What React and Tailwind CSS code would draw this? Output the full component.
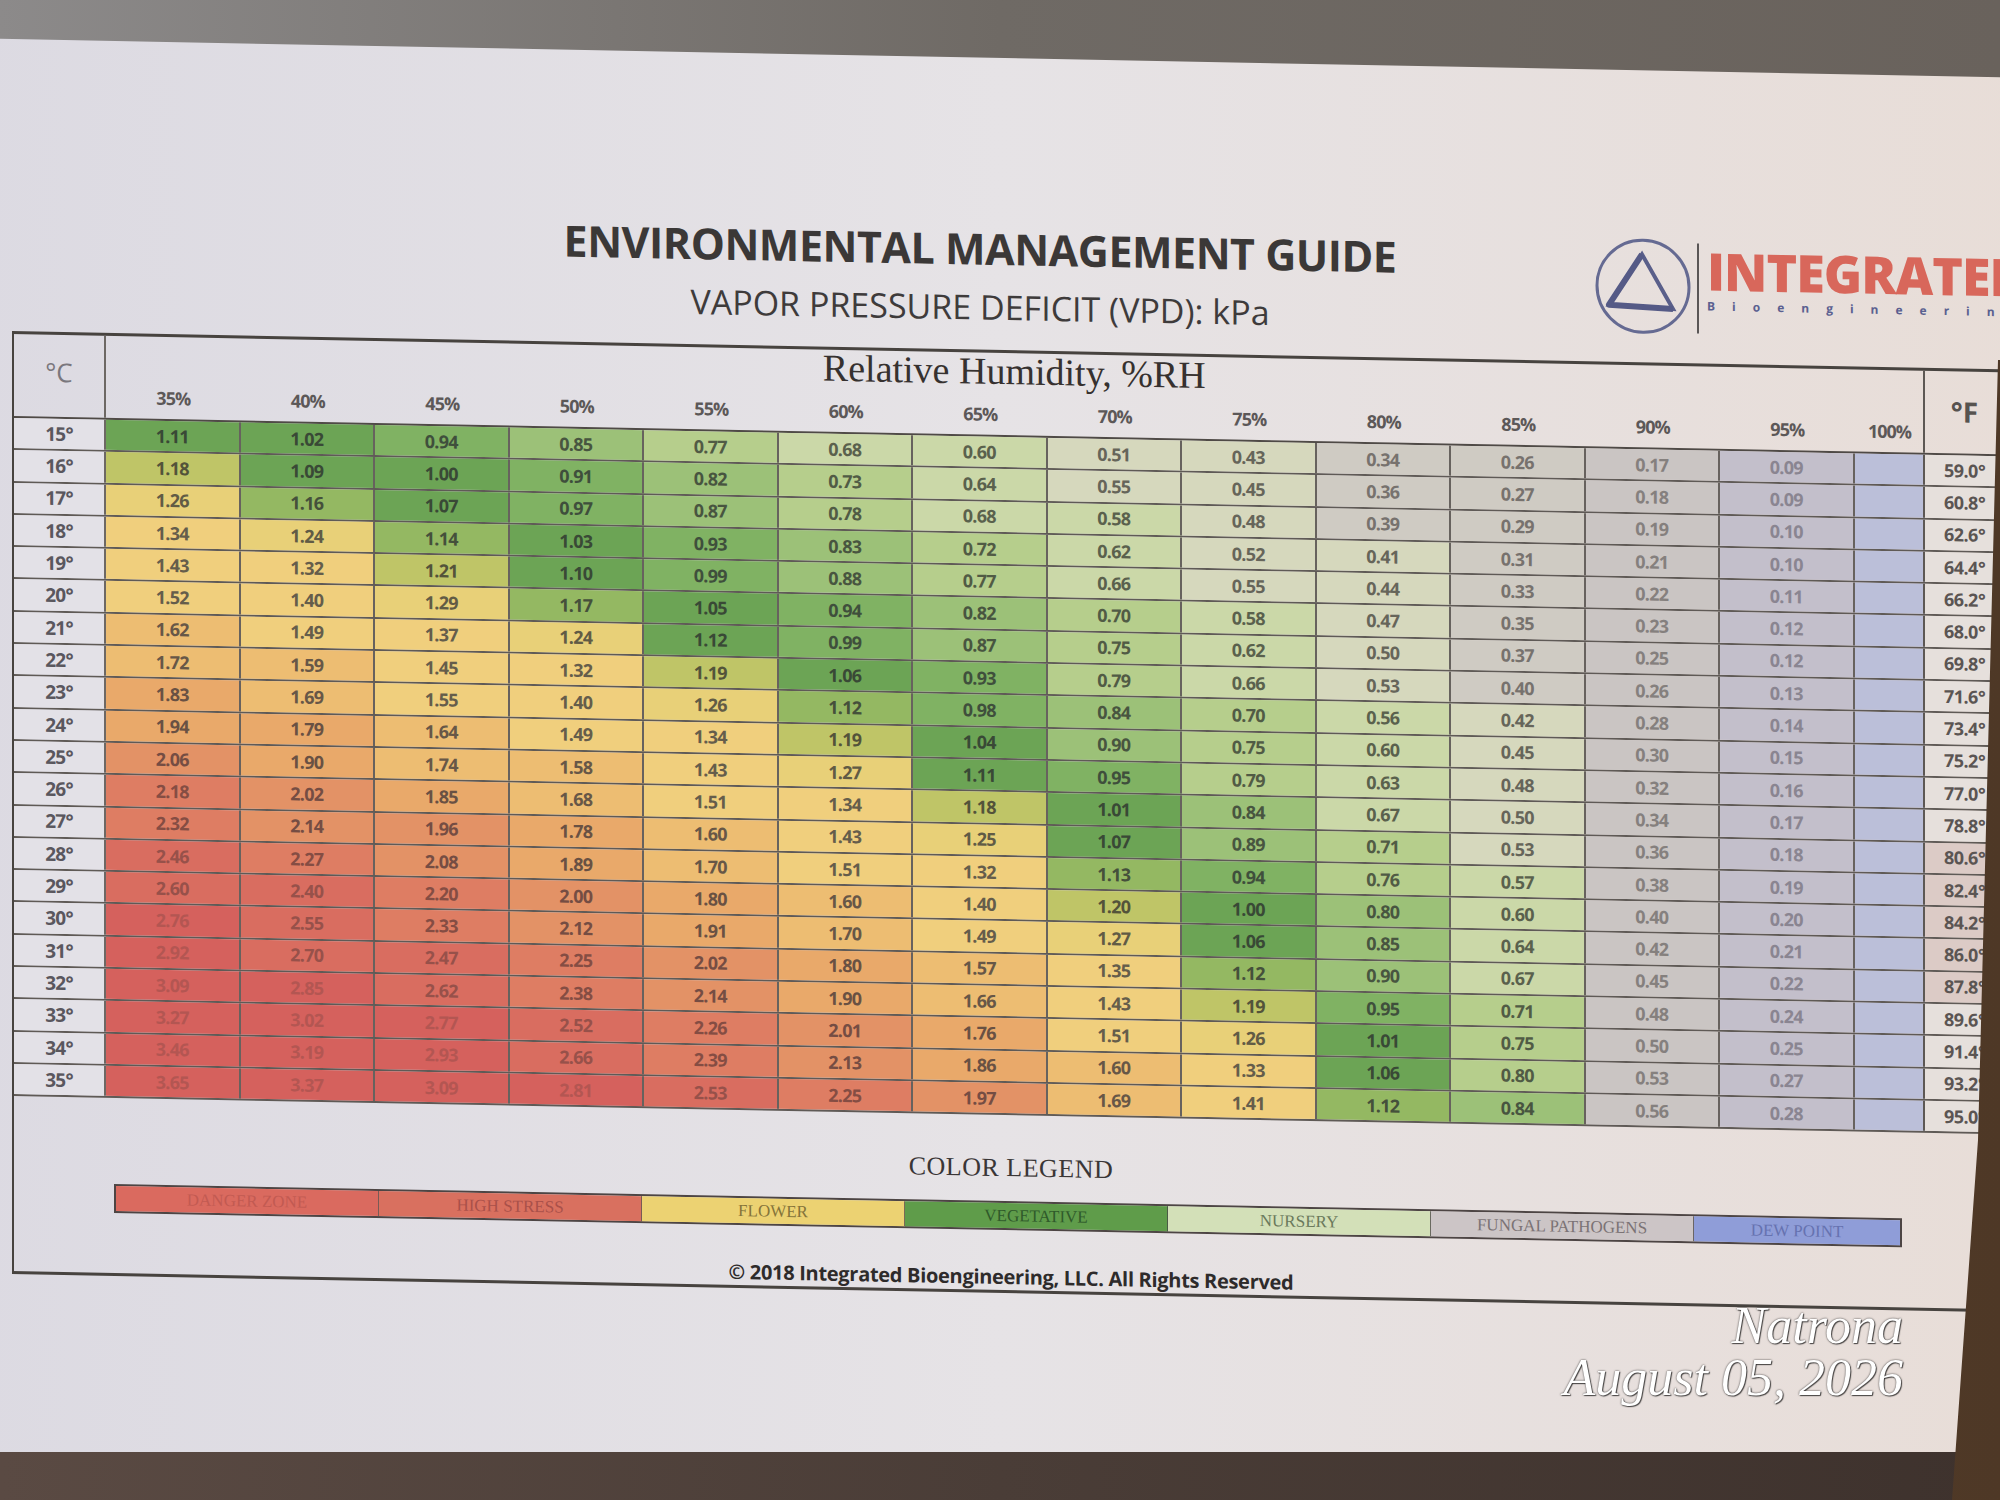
import React from "react";

const TEMPS = Array.from({ length: 21 }, (_, i) => 15 + i);
const RHS = [35, 40, 45, 50, 55, 60, 65, 70, 75, 80, 85, 90, 95, 100];
const svp = (t) => 0.6108 * Math.exp((17.27 * t) / (t + 237.3));

const BUCKETS = [
  [0.4, "bg-[#cfcbc3]", "text-[#77726e]"],
  [0.55, "bg-[#d6d8bd]", "text-[#66655a]"],
  [0.7, "bg-[#cbd8a8]", "text-[#5a614d]"],
  [0.8, "bg-[#b6ce8c]", "text-[#515b45]"],
  [0.9, "bg-[#9cc178]", "text-[#485540]"],
  [1.0, "bg-[#80b263]", "text-[#3f4f3c]"],
  [1.12, "bg-[#6ca455]", "text-[#394936]"],
  [1.17, "bg-[#94b862]", "text-[#45503b]"],
  [1.22, "bg-[#bfc567]", "text-[#53533a]"],
  [1.3, "bg-[#e8d078]", "text-[#615b45]"],
  [1.55, "bg-[#f0cf7d]", "text-[#655d4b]"],
  [1.75, "bg-[#edbd72]", "text-[#675747]"],
  [1.95, "bg-[#e9a96a]", "text-[#695143]"],
  [2.15, "bg-[#e39266]", "text-[#754d43]"],
  [2.4, "bg-[#de7d63]", "text-[#854d43]"],
  [2.7, "bg-[#d96d60]", "text-[#97514a]"],
  [99, "bg-[#d5615d]", "text-[#b35652]"],
];

function cellLook(v, rh) {
  if (rh === 100) return ["bg-[#bbbfd9]", "text-transparent"];
  if (rh === 95) return ["bg-[#c3bfcb]", "text-[#8a8591]"];
  if (rh === 90) return ["bg-[#cac5c3]", "text-[#85807e]"];
  for (const b of BUCKETS) {
    if (v < b[0]) return [b[1], b[2]];
  }
  return ["bg-[#d5615d]", "text-[#b35652]"];
}

const LEGEND = [
  ["DANGER ZONE", "bg-[#da6a5f]", "text-[#c25a52]", "w-[263px] border-r border-[#7a5a55]"],
  ["HIGH STRESS", "bg-[#d9705f]", "text-[#a9514a]", "w-[263px] border-r border-[#7a5a55]"],
  ["FLOWER", "bg-[#ecd272]", "text-[#85743a]", "w-[263px] border-r border-[#7a6a55]"],
  ["VEGETATIVE", "bg-[#5f9c4a]", "text-[#2f5a2a]", "w-[263px] border-r border-[#4a5a45]"],
  ["NURSERY", "bg-[#d3e0b8]", "text-[#6b7a5c]", "w-[263px] border-r border-[#6a6a60]"],
  ["FUNGAL PATHOGENS", "bg-[#ccc5c6]", "text-[#7b7375]", "w-[263px] border-r border-[#6a6565]"],
  ["DEW POINT", "bg-[#8f9dd8]", "text-[#6672b0]", "flex-1"],
];

function Logo() {
  return (
    <div className="flex items-start ml-[13px]">
      <svg width="100" height="100" viewBox="0 0 100 100" className="shrink-0">
        <circle cx="50" cy="50" r="46" fill="none" stroke="#656a92" strokeWidth="3" />
        <path d="M49 18 L16 69 L80 72 Z" fill="none" stroke="#5a5f8a" strokeWidth="4" strokeLinejoin="miter" />
        <path d="M49 18 L16 69 L80 72" fill="none" stroke="#555a86" strokeWidth="6" strokeLinejoin="round" />
      </svg>
      <div className="ml-[4px] mt-[6px] w-[2px] h-[90px] bg-[#5a5656] shrink-0" />
      <div className="ml-[8px] mt-[7px] flex flex-col">
        <div className="text-[52px] leading-[52px] font-extrabold tracking-[-1px] text-[#d8675b] whitespace-nowrap">
          INTEGRATED
        </div>
        <div className="mt-[3px] text-[12px] leading-[14px] font-bold tracking-[17px] text-[#5a6090] whitespace-nowrap">
          Bioengineering
        </div>
      </div>
    </div>
  );
}

export default function App() {
  return (
    <div className="relative w-[2000px] h-[1500px] overflow-hidden flex flex-col font-['Open_Sans',sans-serif]">
      <div className="h-[1452px] shrink-0 overflow-hidden bg-linear-to-r from-[#8c8a8a] via-[#6f6a65] to-[#69625c]">
        <div className="mt-[58px] -ml-[40px] w-[2080px] h-[1480px] skew-y-[1.1deg] bg-linear-to-r from-[#dcdae2] via-[#e6e3e6] to-[#e8ddd7]">
          {/* Header */}
          <div className="flex h-[292px] pt-[166px]">
            <div className="ml-[420px] w-[1200px] flex flex-col items-center shrink-0">
              <div className="text-[43px] leading-[50px] font-bold tracking-[-0.5px] text-[#3b3837] whitespace-nowrap">
                ENVIRONMENTAL MANAGEMENT GUIDE
              </div>
              <div className="mt-[14px] text-[34px] leading-[38px] text-[#3e3b3b] whitespace-nowrap">
                VAPOR PRESSURE DEFICIT (VPD): kPa
              </div>
            </div>
            <Logo />
          </div>

          {/* Framed table + legend */}
          <div className="ml-[52px] w-[1996px] border-t-[3px] border-l-2 border-b-[3px] border-[#47433f]">
            <div className="flex h-[84px] border-b-2 border-[#4f4a46]">
              <div className="w-[92px] shrink-0 border-r-2 border-[#6d6864] flex justify-center pt-[22px] text-[26px] leading-[30px] text-[#7a777d]">
                °C
              </div>
              <div className="w-[1818.5px] shrink-0 border-r-2 border-[#5d5854] flex flex-col">
                <div className="h-[36px] flex items-end justify-center font-['Liberation_Serif',serif] text-[38px] leading-[36px] text-[#36312f] whitespace-nowrap">
                  Relative Humidity, %RH
                </div>
                <div className="mt-[15px] flex">
                  {RHS.map((rh) => (
                    <div
                      key={rh}
                      className={`${rh === 100 ? "w-[70px]" : "w-[134.5px]"} shrink-0 text-center text-[18px] leading-[20px] font-bold tracking-[-1px] text-[#5c5858]`}
                    >
                      {rh}%
                    </div>
                  ))}
                </div>
              </div>
              <div className="w-[80px] shrink-0 flex justify-center pt-[24px] text-[28px] leading-[32px] font-bold text-[#57534f]">
                °F
              </div>
            </div>

            {TEMPS.map((t, i) => {
              const s = svp(t);
              const pink = i >= 12 && i <= 16;
              return (
                <div key={t} className="flex h-[32.3px] border-b-2 border-[#5f5a56]">
                  <div className="w-[92px] shrink-0 border-r-2 border-[#6d6864] bg-[#e3e1e7] flex items-center justify-center text-[19px] font-bold tracking-[-0.8px] text-[#5a575e]">
                    {t}°
                  </div>
                  {RHS.map((rh) => {
                    const v = s * (1 - rh / 100);
                    const [bg, tx] = cellLook(v, rh);
                    return (
                      <div
                        key={rh}
                        className={`${rh === 100 ? "w-[70px] border-r-2 border-[#5d5854]" : "w-[134.5px] border-r-2 border-[#67625e]"} shrink-0 flex items-center justify-center text-[18px] font-bold tracking-[-0.8px] ${bg} ${tx}`}
                      >
                        {rh === 100 ? "" : v.toFixed(2)}
                      </div>
                    );
                  })}
                  <div
                    className={`w-[80px] shrink-0 flex items-center justify-center text-[18px] font-bold tracking-[-0.5px] text-[#5b5553] ${pink ? "bg-[#dccbc6]" : "bg-[#e6e0dc]"}`}
                  >
                    {(t * 1.8 + 32).toFixed(1)}°
                  </div>
                </div>
              );
            })}

            {/* Legend */}
            <div className="flex flex-col items-center pt-[38px] h-[175px]">
              <div className="font-['Liberation_Serif',serif] text-[26px] leading-[30px] text-[#3a3636] tracking-[0.5px]">
                COLOR LEGEND
              </div>
              <div className="self-start ml-[100px] mt-[18px] w-[1788px] h-[29px] flex border-2 border-[#4d4544]">
                {LEGEND.map(([label, bg, tx, w]) => (
                  <div
                    key={label}
                    className={`${w} ${bg} ${tx} shrink-0 flex items-center justify-center font-['Liberation_Serif',serif] text-[17px] leading-none whitespace-nowrap`}
                  >
                    {label}
                  </div>
                ))}
              </div>
              <div className="mt-[34px] text-[20px] leading-[26px] font-bold tracking-[-0.3px] text-[#2e2b2b] whitespace-nowrap">
                © 2018 Integrated Bioengineering, LLC. All Rights Reserved
              </div>
            </div>
          </div>
        </div>
      </div>
      <div className="h-[48px] shrink-0 bg-linear-to-r from-[#5a4a43] via-[#4a3d37] to-[#3e322d]" />

      {/* wooden frame edge on the right */}
      <div className="absolute inset-0 pointer-events-none bg-linear-to-r from-[#6a4c34] to-[#4e3826] [clip-path:polygon(99.9%_24%,98.9%_76%,97.6%_100%,100%_100%,100%_24%)]" />

      {/* photo watermark */}
      <div className="absolute right-[97px] top-[1300px] text-right font-['Liberation_Serif',serif] italic text-[52px] leading-[52px] text-white [text-shadow:0_0_2px_rgba(0,0,0,0.8),1px_1px_1px_rgba(0,0,0,0.6)]">
        <div>Natrona</div>
        <div>August 05, 2026</div>
      </div>
    </div>
  );
}
